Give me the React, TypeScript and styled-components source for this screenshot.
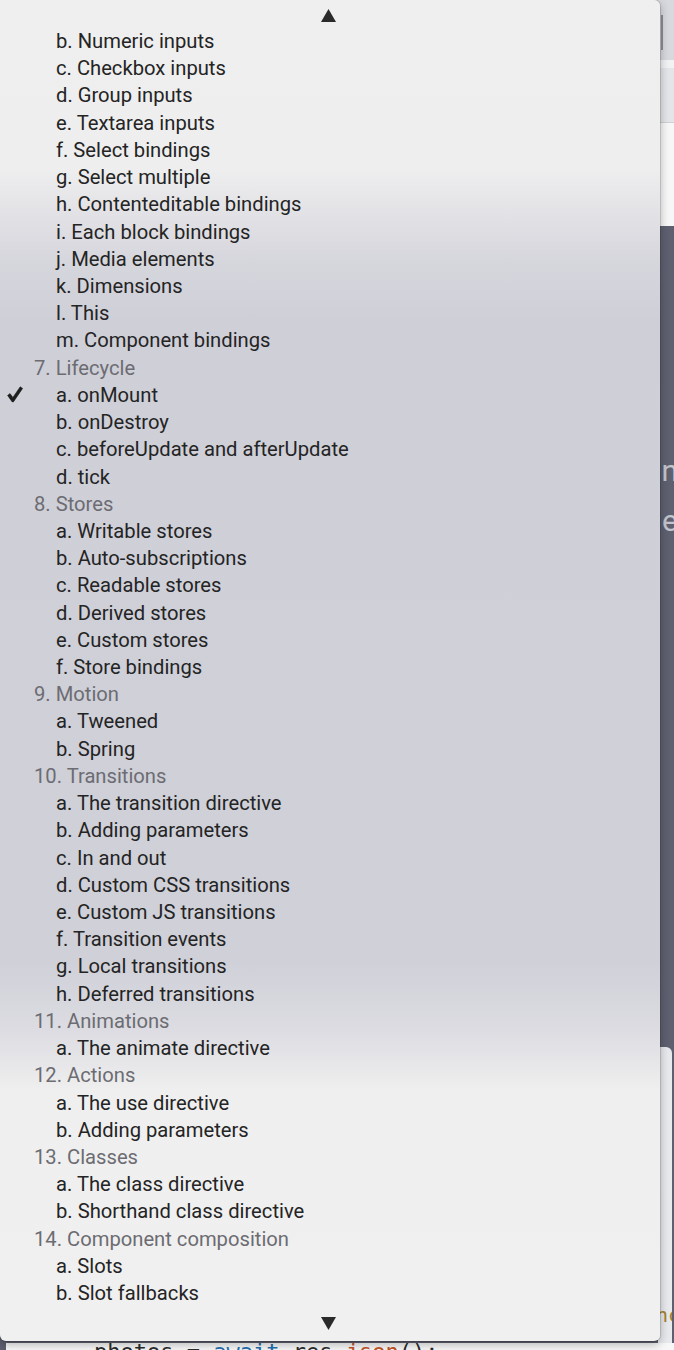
import React from "react";
import styled, { createGlobalStyle } from "styled-components";

type Entry = { label: string; group?: boolean; checked?: boolean };

const entries: Entry[] = [
  { label: "b. Numeric inputs" },
  { label: "c. Checkbox inputs" },
  { label: "d. Group inputs" },
  { label: "e. Textarea inputs" },
  { label: "f. Select bindings" },
  { label: "g. Select multiple" },
  { label: "h. Contenteditable bindings" },
  { label: "i. Each block bindings" },
  { label: "j. Media elements" },
  { label: "k. Dimensions" },
  { label: "l. This" },
  { label: "m. Component bindings" },
  { label: "7. Lifecycle", group: true },
  { label: "a. onMount", checked: true },
  { label: "b. onDestroy" },
  { label: "c. beforeUpdate and afterUpdate" },
  { label: "d. tick" },
  { label: "8. Stores", group: true },
  { label: "a. Writable stores" },
  { label: "b. Auto-subscriptions" },
  { label: "c. Readable stores" },
  { label: "d. Derived stores" },
  { label: "e. Custom stores" },
  { label: "f. Store bindings" },
  { label: "9. Motion", group: true },
  { label: "a. Tweened" },
  { label: "b. Spring" },
  { label: "10. Transitions", group: true },
  { label: "a. The transition directive" },
  { label: "b. Adding parameters" },
  { label: "c. In and out" },
  { label: "d. Custom CSS transitions" },
  { label: "e. Custom JS transitions" },
  { label: "f. Transition events" },
  { label: "g. Local transitions" },
  { label: "h. Deferred transitions" },
  { label: "11. Animations", group: true },
  { label: "a. The animate directive" },
  { label: "12. Actions", group: true },
  { label: "a. The use directive" },
  { label: "b. Adding parameters" },
  { label: "13. Classes", group: true },
  { label: "a. The class directive" },
  { label: "b. Shorthand class directive" },
  { label: "14. Component composition", group: true },
  { label: "a. Slots" },
  { label: "b. Slot fallbacks" },
];

function Arrow({ down }: { down?: boolean }) {
  return (
    <svg width="15" height="13" viewBox="0 0 15 13">
      <polygon
        points={down ? "0,0 15,0 7.5,13" : "7.5,0 15,13 0,13"}
        fill="#2a2a2a"
      />
    </svg>
  );
}

// bold tick, thicker toward the long stroke like the system glyph
function Check() {
  return (
    <svg width="16" height="17" viewBox="0 0 16 17">
      <path
        d="M0.6 9.4 L3 7.6 L5.9 11.4 L13.2 0.8 L15.6 2.4 L6.4 15.9 L5.2 15.9 Z"
        fill="#1e1e1e"
        stroke="#1e1e1e"
        strokeWidth="0.6"
        strokeLinejoin="round"
      />
    </svg>
  );
}

export default function App() {
  return (
    <>
      <GlobalStyle />
      <Screen>
        <Backdrop>
          <TopBand>
            <ScrollThumb />
          </TopBand>
          <ThinBand />
          <ToolBand />
          <WhiteBand />
          <DarkBand>
            <GhostLetter>n</GhostLetter>
            <GhostLetter>e</GhostLetter>
          </DarkBand>
          <PanelBand>
            <Panel>
              <GoldText>nc</GoldText>
            </Panel>
          </PanelBand>
          <CodeBand>
            <CodeLine>
              photos = <Kw>await</Kw> res.<Fn>json</Fn>();
            </CodeLine>
          </CodeBand>
        </Backdrop>

        <Menu>
          <Scroller>
            <Arrow />
          </Scroller>
          <List>
            {entries.map((e, i) => (
              <Row key={i}>
                <Mark>{e.checked && <Check />}</Mark>
                <Label $group={!!e.group}>{e.label}</Label>
              </Row>
            ))}
          </List>
          <Scroller $bottom>
            <Arrow down />
          </Scroller>
        </Menu>
      </Screen>
    </>
  );
}

const GlobalStyle = createGlobalStyle`
  html, body {
    margin: 0;
    padding: 0;
    background: #5e6070;
  }
`;

const Screen = styled.div`
  position: relative;
  width: 674px;
  height: 1350px;
  overflow: hidden;
  font-family: Roboto, "Liberation Sans", sans-serif;
`;

const Backdrop = styled.div`
  display: flex;
  flex-direction: column;
  height: 100%;
`;

const TopBand = styled.div`
  height: 60px;
  background: #d8d9de;
  display: flex;
  justify-content: flex-end;
  padding: 15px 11px 0 0;
  box-sizing: border-box;
`;

const ScrollThumb = styled.div`
  width: 2px;
  height: 35px;
  background: #8d8e94;
`;

const ThinBand = styled.div`
  height: 8px;
  background: #f1f2f4;
`;

const ToolBand = styled.div`
  height: 54px;
  background: #e4e5e8;
  border-bottom: 1px solid #cfd0d4;
`;

const WhiteBand = styled.div`
  height: 103px;
  background: #f7f7f8;
`;

const DarkBand = styled.div`
  height: 821px;
  background: #5e6070;
  display: flex;
  flex-direction: column;
  align-items: flex-end;
  padding: 220px 0 0 0;
  box-sizing: border-box;
`;

const GhostLetter = styled.span`
  font-size: 30px;
  line-height: 50px;
  color: #c4c5cd;
  margin-right: -4px;
`;

const PanelBand = styled.div`
  height: 296px;
  background: #5e6070;
  display: flex;
  justify-content: flex-end;
`;

const Panel = styled.div`
  width: 14px;
  margin-right: 2px;
  background: #e7e9ed;
  border-top-right-radius: 6px;
  display: flex;
  align-items: flex-end;
  padding-bottom: 16px;
  box-sizing: border-box;
  overflow: hidden;
`;

const GoldText = styled.span`
  font-family: "DejaVu Sans Mono", monospace;
  font-size: 20px;
  color: #a4812c;
  margin-left: -2px;
`;

const CodeBand = styled.div`
  flex: 1;
  background: #f7f7f7;
  border-left: 6px solid #5e6070;
  overflow: hidden;
`;

const CodeLine = styled.div`
  font-family: "DejaVu Sans Mono", monospace;
  font-size: 22px;
  line-height: 22px;
  margin-top: -2px;
  padding-left: 88px;
  color: #2b2b2b;
  white-space: pre;
`;

const Kw = styled.span`
  color: #1f6fb0;
`;

const Fn = styled.span`
  color: #c4521f;
`;

const Menu = styled.div`
  position: absolute;
  top: 0;
  left: 0;
  width: 660px;
  height: 1341px;
  border-radius: 0 6px 6px 6px;
  box-shadow: 0 0 0 1px rgba(0, 0, 0, 0.12), 0 3px 10px rgba(0, 0, 0, 0.3);
  background: linear-gradient(
    to bottom,
    #efefef 0px,
    #eeeeef 170px,
    #d6d6dd 260px,
    #cfcfd8 320px,
    #cfd0d8 960px,
    #dcdce2 1030px,
    #efefef 1090px,
    #f0f0f0 1341px
  );
  display: flex;
  flex-direction: column;
`;

const Scroller = styled.div<{ $bottom?: boolean }>`
  height: ${(p) => (p.$bottom ? "34px" : "27.4px")};
  display: flex;
  justify-content: center;
  align-items: ${(p) => (p.$bottom ? "flex-start" : "center")};
  padding: ${(p) => (p.$bottom ? "10px 4px 0 0" : "4px 4px 0 0")};
  box-sizing: border-box;
`;

const List = styled.div`
  display: flex;
  flex-direction: column;
`;

const Row = styled.div`
  height: 27.22px;
  display: flex;
  align-items: center;
`;

const Mark = styled.span`
  width: 34px;
  padding-left: 7px;
  box-sizing: border-box;
  display: flex;
  align-items: center;
`;

const Label = styled.span<{ $group: boolean }>`
  font-size: 20.2px;
  color: ${(p) => (p.$group ? "#6c6c72" : "#242424")};
  padding-left: ${(p) => (p.$group ? "0" : "22px")};
  white-space: nowrap;
`;
